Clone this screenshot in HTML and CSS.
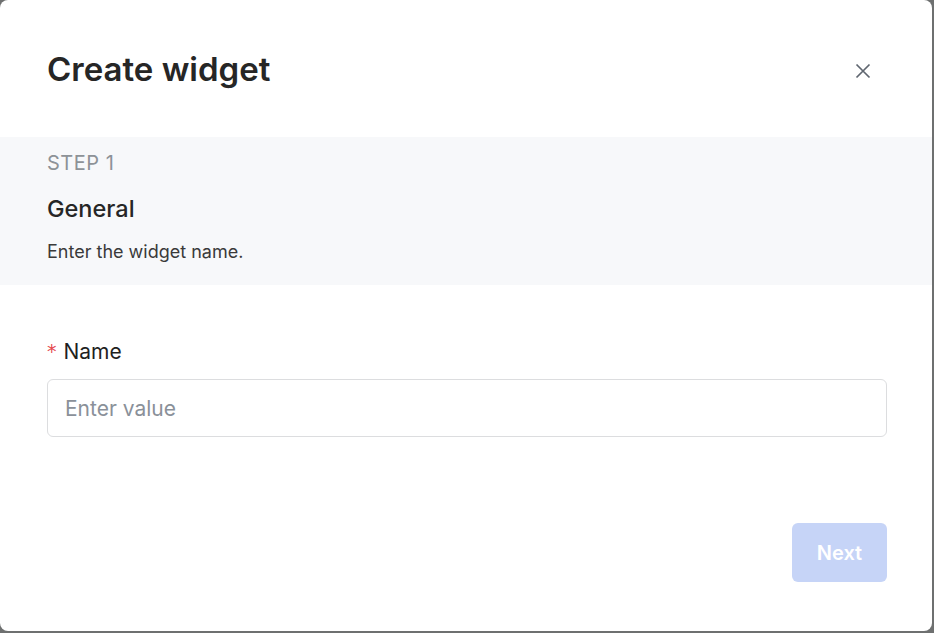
FILE: index.html
```html
<!DOCTYPE html>
<html>
<head>
<meta charset="utf-8">
<link rel="stylesheet" href="styles.css">
</head>
<body>
<div class="modal">
  <div class="header">
    <h1 class="title">Create widget</h1>
    <button class="close" aria-label="Close">
      <svg width="16" height="16" viewBox="0 0 16 16"><path d="M1.5 1.5L14.5 14.5M14.5 1.5L1.5 14.5" stroke="#5f6670" stroke-width="1.7" fill="none"/></svg>
    </button>
  </div>
  <div class="step">
    <div class="step-num">STEP 1</div>
    <div class="step-title">General</div>
    <div class="step-desc">Enter the widget name.</div>
  </div>
  <div class="form">
    <label class="label"><span class="req">*</span>Name</label>
    <input class="input" type="text" placeholder="Enter value">
  </div>
  <div class="footer">
    <button class="next">Next</button>
  </div>
</div>
</body>
</html>
```
FILE: styles.css
```css
html, body {
  margin: 0;
  padding: 0;
  height: 100%;
}
body {
  background: #6e7070;
  font-family: Inter, "Noto Sans", sans-serif;
  overflow: hidden;
}
.modal {
  width: 932px;
  height: 631px;
  background: #ffffff;
  border-radius: 8px;
  display: flex;
  flex-direction: column;
}
.header {
  height: 137px;
  box-sizing: border-box;
  padding: 0 45px 0 47px;
  display: flex;
  align-items: center;
  justify-content: space-between;
}
.title {
  margin: 0;
  font-size: 33px;
  font-weight: 600;
  color: #262626;
}
.close {
  border: none;
  background: none;
  padding: 0;
  width: 16px;
  height: 16px;
  margin-right: 16px;
  margin-top: 4px;
  display: flex;
}
.step {
  background: #f7f8fa;
  height: 148px;
  box-sizing: border-box;
  padding: 14px 45px 0 47px;
}
.step-num {
  font-size: 20px;
  line-height: 25px;
  letter-spacing: 0.5px;
  color: #8d9297;
}
.step-title {
  margin-top: 18px;
  font-size: 23.5px;
  line-height: 29px;
  font-weight: 500;
  color: #262626;
}
.step-desc {
  margin-top: 17px;
  font-size: 18px;
  line-height: 24px;
  color: #3a3a3a;
}
.form {
  padding: 53px 45px 0 47px;
  display: flex;
  flex-direction: column;
}
.label {
  font-size: 21px;
  line-height: 27px;
  color: #1f1f1f;
  display: flex;
  align-items: center;
}
.req {
  color: #e5484d;
  font-size: 19px;
  margin-right: 7px;
  font-family: "DejaVu Sans", sans-serif;
}
.input {
  margin-top: 14px;
  height: 58px;
  box-sizing: border-box;
  border: 1px solid #dcdddf;
  border-radius: 6px;
  padding: 0 17px;
  font-family: inherit;
  font-size: 21px;
  color: #262626;
  outline: none;
}
.input::placeholder {
  color: #8a9099;
}
.footer {
  padding: 86px 45px 0 47px;
  display: flex;
  justify-content: flex-end;
}
.next {
  width: 95px;
  height: 59px;
  border: none;
  border-radius: 6px;
  background: #c6d4f7;
  color: #ffffff;
  font-family: inherit;
  font-size: 20px;
  font-weight: 600;
}
```
